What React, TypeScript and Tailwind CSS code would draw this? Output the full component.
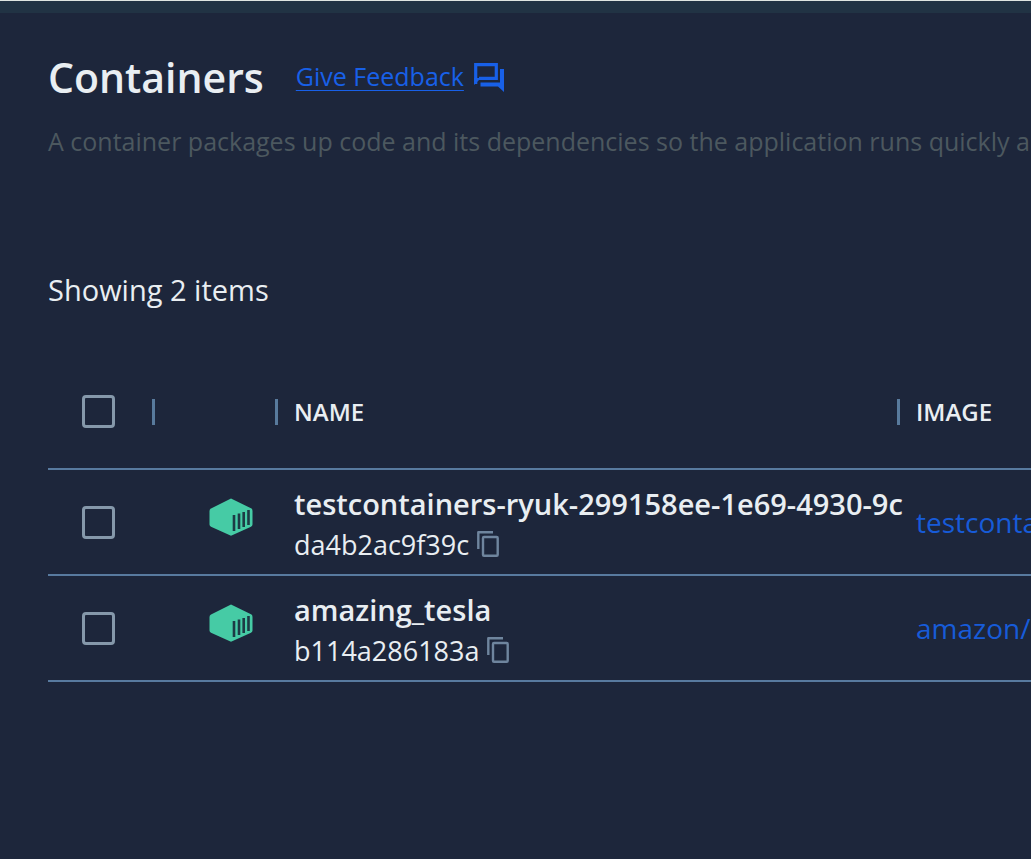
interface Container {
  id: string;
  name: string;
  image: string;
}

const containers: Container[] = [
  {
    id: "da4b2ac9f39c",
    name: "testcontainers-ryuk-299158ee-1e69-4930-9c",
    image: "testcontainers/ryuk",
  },
  {
    id: "b114a286183a",
    name: "amazing_tesla",
    image: "amazon/dynamodb-local",
  },
];

function Checkbox({ label }: { label: string }) {
  return (
    <input
      type="checkbox"
      aria-label={label}
      className="block size-[33px] ml-[34px] appearance-none rounded-sm border-3 border-[#8598aa] checked:bg-[#1c63ed]"
    />
  );
}

function FeedbackIcon() {
  return (
    <svg
      viewBox="0 0 30 29"
      className="block w-[30px] h-[29px]"
      fill="none"
      stroke="currentColor"
      aria-hidden="true"
    >
      <path d="M1.7 21 V1.7 H22.3 V15.3 H5" strokeWidth="3.2" />
      <path d="M0.1 15 H7 L0.1 22 Z" fill="currentColor" stroke="none" />
      <path
        d="M26 6 H30 V29 L24 23.5 H6.5 V19.5 H26 Z"
        fill="currentColor"
        stroke="none"
      />
    </svg>
  );
}

function CopyIcon() {
  return (
    <svg
      viewBox="0 0 22 26"
      className="block w-[22px] h-[26px]"
      fill="none"
      stroke="currentColor"
      strokeWidth="2.4"
      strokeLinejoin="round"
      aria-hidden="true"
    >
      <path d="M1.3 18 V1.3 H16" />
      <rect x="6" y="6" width="14.7" height="18.7" rx="1" />
    </svg>
  );
}

function ContainerIcon() {
  return (
    <svg viewBox="0 0 44 38" className="block w-11 h-[38px]" aria-hidden="true">
      <path
        d="M22 0.5 L42.5 10.5 Q43.5 11.2 43.5 13 V26.5 Q43.5 28 42 28.8 L22 37.8 L2 28.8 Q0.5 28 0.5 26.5 V13 Q0.5 11.2 2 10.5 Z"
        fill="#46cba5"
      />
      <path
        d="M25 17 V33 M30 15.5 V31 M34.7 14 V29 M39.5 12 V27"
        stroke="#1d3a45"
        strokeWidth="2.6"
        fill="none"
      />
    </svg>
  );
}

function ColumnHeader({ label }: { label?: string }) {
  return (
    <th scope="col" className="p-0 text-left font-semibold">
      <div className="flex items-center justify-between h-[26px] pl-4">
        <span>{label}</span>
        <span className="w-[3px] h-[26px] bg-[#587a9c]" />
      </div>
    </th>
  );
}

function ContainerRow({ container }: { container: Container }) {
  return (
    <tr className="h-[106px] border-b-2 border-[#587a9f]">
      <td className="p-0">
        <Checkbox label={`Select ${container.name}`} />
      </td>
      <td className="p-0 pb-2.5 pl-[54px]">
        <ContainerIcon />
      </td>
      <td className="p-0 pt-1 pl-4 whitespace-nowrap">
        <div className="text-[29px] leading-10 font-semibold">
          {container.name}
        </div>
        <div className="flex items-center gap-2 text-[27px] leading-[41px]">
          <span>{container.id}</span>
          <button
            type="button"
            aria-label="Copy container ID"
            className="text-[#6f859e]"
          >
            <CopyIcon />
          </button>
        </div>
      </td>
      <td className="p-0 pl-4 whitespace-nowrap overflow-hidden">
        <a href="#image" className="text-[28px] text-[#175bd8]">
          {container.image}
        </a>
      </td>
    </tr>
  );
}

export default function App() {
  return (
    <div className="min-h-screen overflow-hidden bg-[#1d263b] text-[#e9eef2] font-['Open_Sans','Noto_Sans',sans-serif]">
      <div className="h-[13px] border-t border-[#dfe5e1] bg-[#213344]" />

      <main className="pl-12 pt-9">
        <header>
          <div className="flex items-center gap-8">
            <h1 className="text-[41px] leading-[56px] font-semibold">
              Containers
            </h1>
            <a
              href="#feedback"
              className="flex items-center gap-2.5 text-[#1860e8]"
            >
              <span className="text-[25px] underline decoration-1 underline-offset-4">
                Give Feedback
              </span>
              <FeedbackIcon />
            </a>
          </div>
          <p className="mt-[18px] text-[25px] leading-9 whitespace-nowrap text-[#4c585f]">
            A container packages up code and its dependencies so the application
            runs quickly and reliably
          </p>
        </header>

        <p className="mt-[111px] text-[29px] leading-10">Showing 2 items</p>

        <table className="mt-[45px] w-full table-fixed border-collapse">
          <colgroup>
            <col className="w-[107px]" />
            <col className="w-[123px]" />
            <col className="w-[622px]" />
            <col />
          </colgroup>
          <thead>
            <tr className="h-[114px] border-b-2 border-[#587a9f] text-2xl">
              <td className="p-0">
                <div className="flex items-center justify-between">
                  <Checkbox label="Select all containers" />
                  <span className="w-[3px] h-[26px] bg-[#587a9c]" />
                </div>
              </td>
              <ColumnHeader />
              <ColumnHeader label="NAME" />
              <th scope="col" className="p-0 pl-4 text-left font-semibold">
                IMAGE
              </th>
            </tr>
          </thead>
          <tbody>
            {containers.map((container) => (
              <ContainerRow key={container.id} container={container} />
            ))}
          </tbody>
        </table>
      </main>
    </div>
  );
}
